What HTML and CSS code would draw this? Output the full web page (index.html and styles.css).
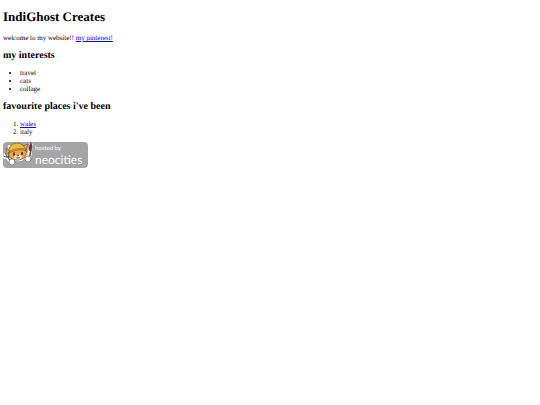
FILE: index.html
```html
<!DOCTYPE html>
<html lang="en">
	<head>
		<meta charset="utf-8"/>
		<title>IndiGhost Creates</title>
		<link rel="stylesheet" href="styles.css">
	</head>
	<body>
		<h1>IndiGhost Creates</h1>
		<p>welcome to my website!! <a href="#pinterest">my pinterest!</a></p>
		<h2>my interests</h2>
		<ul>
			<li>travel</li>
			<li>cats</li>
			<li>collage</li>
		</ul>
		<h2>favourite places i've been</h2>
		<ol>
			<li><a href="#wales">wales</a></li>
			<li>italy</li>
		</ol>
		<a class="badge" href="#neocities">
			<svg class="cat" viewBox="0 0 32 26" aria-hidden="true">
				<g stroke-linecap="round" stroke-linejoin="round">
					<path d="M2 12l6 9M5 11l1 5-5-1" fill="none" stroke="#fff" stroke-width="3"/>
					<path d="M2 11l6 9M5 10.500l1 5-5-1" fill="none" stroke="#555" stroke-width="1.200"/>
					<path d="M6 4l1 4c-1 3-1 6 2 8 3 3 9 3 12 0 2-2 3-4 2-7l1-6-5 2-7-2-2 3z" fill="#fff" stroke="#fff" stroke-width="2"/>
					<path d="M6 9c-1 3 0 6 3 8 4 2 9 1 12-1 2-2 3-5 2-8l-8-2z" fill="#f2a34c" stroke="#5b3a1c" stroke-width=".7"/>
					<path d="M19 4l6-2-2 7z" fill="#f2a34c" stroke="#5b3a1c" stroke-width=".7"/>
					<path d="M6 11c-1-5 2-9 7-10 4 0 8 2 10 7-6-1-11 0-17 3z" fill="#eebb3a" stroke="#76591b" stroke-width=".7"/>
					<path d="M6 10c5-4 10-4 16-3" fill="none" stroke="#b8871b" stroke-width="1.300"/>
					<path d="M6 9l-3-3 1 6z" fill="#eebb3a" stroke="#76591b" stroke-width=".6"/>
					<ellipse cx="15" cy="15" rx="4" ry="2.500" fill="#fff5df"/>
					<path d="M11 11v2M19 10.500v2" stroke="#222" stroke-width="1.500"/>
					<path d="M14 13h2l-1 1zM13 15.500c1 1 3 1 4 0" fill="#8c3c28" stroke="#5b3a1c" stroke-width=".6"/>
					<path d="M28 3l-2 13" stroke="#fff" stroke-width="4"/>
					<path d="M28 8l-2 9" stroke="#6d4b33" stroke-width="1.500"/>
					<path d="M28 1c2 3 1 6-1 8-2-2-1-5 1-8z" fill="#8f2828" stroke="#4c2020" stroke-width=".6"/>
					<circle cx="9" cy="20" r="3" fill="#fff" stroke="#776c62" stroke-width=".7"/>
					<circle cx="25" cy="17" r="3" fill="#fff" stroke="#776c62" stroke-width=".7"/>
				</g>
			</svg>
			<span class="badge-text">
				<span class="hosted">hosted by</span>
				<span class="host">neocities</span>
			</span>
		</a>
	</body>
</html>
```
FILE: styles.css
```css
body{
	margin: 9px 3px;
	background-color: white;
	color: black;
	font-family: "Liberation Serif", "Times New Roman", serif;
	font-size: 7px;
	line-height: 8px;
	text-rendering: geometricPrecision;
}
h1{
	margin: 0 0 9px;
	font-size: 13px;
	line-height: 16px;
}
h2{
	margin: 8px 0 7px;
	font-size: 10px;
	line-height: 12px;
}
p{
	margin: 0;
}
ul,ol{
	margin: 0 0 6px;
	padding-left: 17px;
}
a{
	color: #0000ee;
}
.badge{
	display: flex;
	align-items: center;
	width: 85px;
	height: 26px;
	border-radius: 4px;
	background-color: #a5a5a5;
	color: white;
	font-family: Lato, "Open Sans", sans-serif;
	text-decoration: none;
}
.cat{
	width: 32px;
	height: 26px;
	flex: none;
}
.badge-text{
	display: flex;
	flex-direction: column;
}
.hosted{
	font-size: 6px;
	line-height: 8px;
}
.host{
	font-size: 12px;
	line-height: 13px;
}
```
